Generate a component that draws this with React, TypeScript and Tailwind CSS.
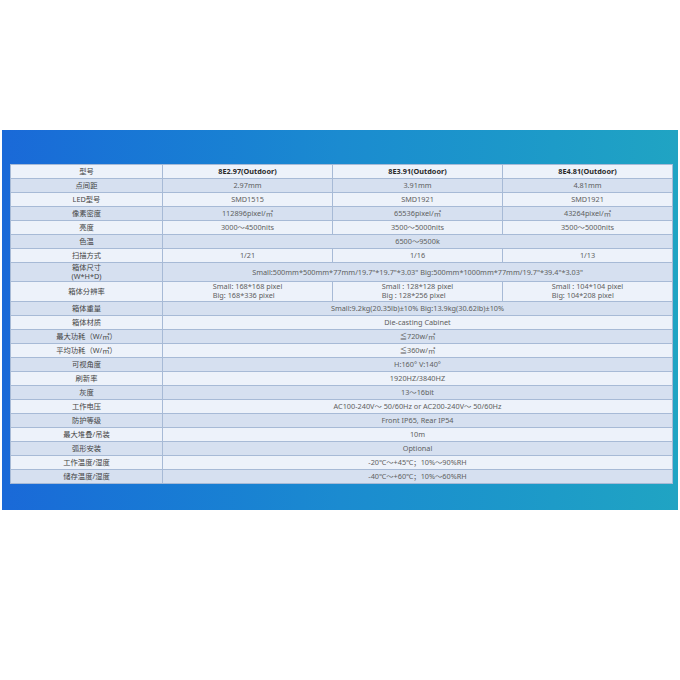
import React from 'react'

type Row = {
  label: React.ReactNode
  cells: React.ReactNode[] // 1 entry = spans the three model columns
  tall?: boolean
  head?: boolean
}

function Res({ small, big }: { small: string; big: string }) {
  return (
    <div className="inline-block text-left leading-[9px]">
      <div>{small}</div>
      <div>{big}</div>
    </div>
  )
}

const rows: Row[] = [
  { label: '型号', cells: ['8E2.97(Outdoor)', '8E3.91(Outdoor)', '8E4.81(Outdoor)'], head: true },
  { label: '点间距', cells: ['2.97mm', '3.91mm', '4.81mm'] },
  { label: 'LED型号', cells: ['SMD1515', 'SMD1921', 'SMD1921'] },
  { label: '像素密度', cells: ['112896pixel/㎡', '65536pixel/㎡', '43264pixel/㎡'] },
  { label: '亮度', cells: ['3000～4500nits', '3500～5000nits', '3500～5000nits'] },
  { label: '色温', cells: ['6500～9500k'] },
  { label: '扫描方式', cells: ['1/21', '1/16', '1/13'] },
  {
    label: (
      <div className="leading-[9px]">
        <div>箱体尺寸</div>
        <div>(W*H*D)</div>
      </div>
    ),
    cells: ['Small:500mm*500mm*77mm/19.7"*19.7"*3.03" Big:500mm*1000mm*77mm/19.7"*39.4"*3.03"'],
    tall: true,
  },
  {
    label: '箱体分辨率',
    cells: [
      <Res small="Small:  168*168 pixel" big="Big:  168*336 pixel" />,
      <Res small="Small : 128*128 pixel" big="Big : 128*256 pixel" />,
      <Res small="Small : 104*104 pixel" big="Big: 104*208 pixel" />,
    ],
    tall: true,
  },
  { label: '箱体重量', cells: ['Small:9.2kg(20.35lb)±10% Big:13.9kg(30.62lb)±10%'] },
  { label: '箱体材质', cells: ['Die-casting Cabinet'] },
  { label: '最大功耗（W/㎡）', cells: ['≦720w/㎡'] },
  { label: '平均功耗（W/㎡）', cells: ['≦360w/㎡'] },
  { label: '可视角度', cells: ['H:160°  V:140°'] },
  { label: '刷新率', cells: ['1920HZ/3840HZ'] },
  { label: '灰度', cells: ['13～16bit'] },
  { label: '工作电压', cells: ['AC100-240V～ 50/60Hz or AC200-240V～ 50/60Hz'] },
  { label: '防护等级', cells: ['Front IP65, Rear IP54'] },
  { label: '最大堆叠/吊装', cells: ['10m'] },
  { label: '弧形安装', cells: ['Optional'] },
  { label: '工作温度/湿度', cells: ['-20℃～+45℃；10%～90%RH'] },
  { label: '储存温度/湿度', cells: ['-40℃～+60℃；10%～60%RH'] },
]

export default function App() {
  return (
    <div className="w-[680px] h-[680px] bg-white pt-[130px] pl-[2px] font-['Noto_Sans','Noto_Sans_CJK_SC',sans-serif]">
      <div className="w-[676px] h-[380px] bg-linear-to-r from-[#1a69d8] via-[#1b8bd0] to-[#20a4c3] pt-[34px] pl-[8px]">
        <table className="table-fixed border-collapse border border-[#c9d6ea] text-[7.3px] text-center">
          <colgroup>
            <col className="w-[152px]" />
            <col className="w-[170px]" />
            <col className="w-[170px]" />
            <col className="w-[170px]" />
          </colgroup>
          <tbody>
            {rows.map((r, i) => (
              <tr
                key={i}
                className={`${r.tall ? 'h-[19px]' : 'h-[14px]'} ${i % 2 === 0 ? 'bg-[#edf2fa]' : 'bg-[#d6e0f0]'}`}
              >
                <td className="border border-[#a7bad6] p-0 text-[#444] whitespace-nowrap">{r.label}</td>
                {r.cells.length === 1 ? (
                  <td colSpan={3} className="border border-[#a7bad6] p-0 text-[#606060] whitespace-nowrap">
                    {r.cells[0]}
                  </td>
                ) : (
                  r.cells.map((c, j) => (
                    <td
                      key={j}
                      className={`border border-[#a7bad6] p-0 whitespace-nowrap ${r.head ? 'font-bold text-[#2a2a2a]' : 'text-[#606060]'}`}
                    >
                      {c}
                    </td>
                  ))
                )}
              </tr>
            ))}
          </tbody>
        </table>
      </div>
    </div>
  )
}
